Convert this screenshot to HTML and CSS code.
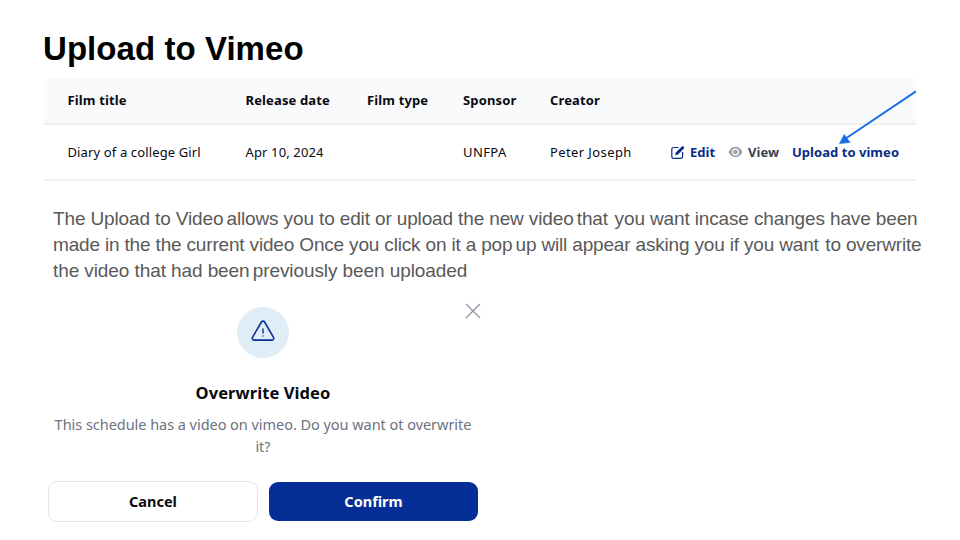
FILE: index.html
```html
<!DOCTYPE html>
<html lang="en">
<head>
<meta charset="utf-8">
<title>Upload to Vimeo</title>
<link rel="stylesheet" href="styles.css">
</head>
<body>
<main class="slide">
  <h1 class="title">Upload to Vimeo</h1>
  <section class="films">
    <div class="row head">
      <span>Film title</span><span>Release date</span><span>Film type</span><span>Sponsor</span><span>Creator</span>
    </div>
    <div class="row">
      <span>Diary of a college Girl</span><span>Apr 10, 2024</span><span></span><span class="sponsor">UNFPA</span><span class="creator">Peter Joseph</span>
      <div class="actions">
        <a class="edit"><svg width="14" height="15" viewBox="0 0 14 15"><path d="M7.500 2.500H2.600A1.800 1.800 0 0 0 .8 4.300v7.200a1.800 1.800 0 0 0 1.800 1.800h7.200a1.800 1.800 0 0 0 1.800-1.800V7" fill="none" stroke="currentColor" stroke-width="1.200"/><path d="M4.200 10.300l.6-2.900L10.900 1.400a1 1 0 0 1 1.400 0l.6.6a1 1 0 0 1 0 1.400L7 9.500z" fill="currentColor"/></svg><span>Edit</span></a>
        <a class="view"><svg width="15" height="12" viewBox="0 0 16 12"><path d="M.6 6C2 2.400 4.800.5 8 .5S14 2.400 15.400 6C14 9.600 11.200 11.500 8 11.500S2 9.600.6 6z" fill="#9da3ae"/><circle cx="8" cy="6" r="3.100" fill="none" stroke="#fff" stroke-width="1.200"/></svg><span>View</span></a>
        <a class="upload">Upload to vimeo</a>
      </div>
    </div>
    <svg class="arrow" width="80" height="58" viewBox="0 0 80 58"><path d="M80 13.300L9 61" stroke="#176ae8" stroke-width="2"/><path d="M3.500 65.500L8.300 56.500L14 64.500z" fill="#176ae8" stroke="#176ae8" stroke-width=".6"/></svg>
  </section>
  <p class="copy">
    <span class="line l1">The Upload to Video<span class="tight"> </span>allows you to edit or upload the new video<span class="tight"> </span>that<span class="wide"> </span>you want incase changes have been</span>
    <span class="line l2">made in the the current video Once you click on it a pop<span class="tight"> </span>up will appear asking you if you want<span class="wide"> </span>to overwrite</span>
    <span class="line l3">the video that had been<span class="tight"> </span>previously been uploaded</span>
  </p>
  <section class="dialog">
    <svg class="close" width="16" height="16" viewBox="0 0 16 16"><path d="M1 1l14 14M15 1L1 15" stroke="#9297a3" stroke-width="1.400"/></svg>
    <div class="badge"><svg width="24" height="24" viewBox="0 0 24 24" fill="none" stroke="#0b2f91" stroke-width="1.600" stroke-linejoin="round" stroke-linecap="round"><path d="M10.400 3L1.500 18.300A1.900 1.900 0 0 0 3.100 21.100h17.800a1.900 1.900 0 0 0 1.600-2.800L13.600 3a1.850 1.850 0 0 0-3.200 0z"/><path stroke-width="1.400" d="M12 10v4M12 17v.1"/></svg></div>
    <h2>Overwrite Video</h2>
    <p class="question"><span class="line">This schedule has a video on vimeo. Do you want ot overwrite</span><span class="line">it?</span></p>
    <div class="buttons"><button class="cancel"><span>Cancel</span></button><button class="confirm"><span>Confirm</span></button></div>
  </section>
</main>
</body>
</html>
```
FILE: styles.css
```css
*{box-sizing:border-box}
body{margin:0;background:#fff;font-family:"Noto Sans",sans-serif;color:#080a10}
.slide{width:960px;height:540px;overflow:hidden}
.title{margin:0;padding:30px 0 0 43px;height:78px;font:bold 33px/38px "Liberation Sans",sans-serif;letter-spacing:.06px;color:#000;white-space:nowrap}
.films{position:relative;margin-left:44px;width:872px;height:103px;font-size:13px;letter-spacing:.13px}
.row{display:grid;grid-template-columns:178px 121.500px 96px 87px 121px 1fr;align-items:center;height:56px;padding-left:23.500px;border-bottom:2px solid #eff0f3;white-space:nowrap}
.head{height:47px;padding-bottom:2px;background:#f9fafc;border-radius:7px 0 0 0;font-weight:700;letter-spacing:.14px}
.sponsor,.creator{letter-spacing:.4px}
.actions{display:flex;align-items:center;font-weight:700;letter-spacing:.04px;color:#0b2b85}
.actions a{display:flex;align-items:center}
.edit{gap:5px;width:57px}
.view{gap:5px;width:64px;color:#3a404c}
.arrow{position:absolute;left:792px;top:0;overflow:visible;clip-path:inset(0 0 -12px 0)}
.copy{margin:0;padding:25px 0 0 53px;font:19px/26px "Liberation Sans",sans-serif;color:#595959}
.line{display:block;white-space:nowrap}
.l1{letter-spacing:-.135px}
.l2{letter-spacing:-.17px}
.l3{letter-spacing:-.09px}
.tight{word-spacing:-2px}
.wide{word-spacing:1.500px}
.dialog{position:relative;margin:22.500px 0 0 48px;width:430px}
.close{position:absolute;left:417px;top:-4px}
.badge{display:flex;align-items:center;justify-content:center;width:52px;height:51.500px;margin:0 0 0 189px;padding-bottom:2px;border-radius:50%;background:#dfedf7}
h2{margin:22px 0 0;font-size:16.500px;line-height:26px;font-weight:700;letter-spacing:.08px;text-align:center}
.question{margin:8px 0 0;font-size:14.500px;line-height:21.500px;letter-spacing:-.04px;text-align:center;color:#6b7280}
.buttons{display:flex;gap:11.400px;margin-top:24px}
button{height:41px;width:210px;padding:0 0 1px;border:1.500px solid #e5e7eb;border-radius:9px;background:#fff;font:700 14.500px "Noto Sans",sans-serif;color:#080a10}
.confirm{width:208.300px;height:39px;margin-top:1px;border:0;background:#052e96;color:#fff}
```
